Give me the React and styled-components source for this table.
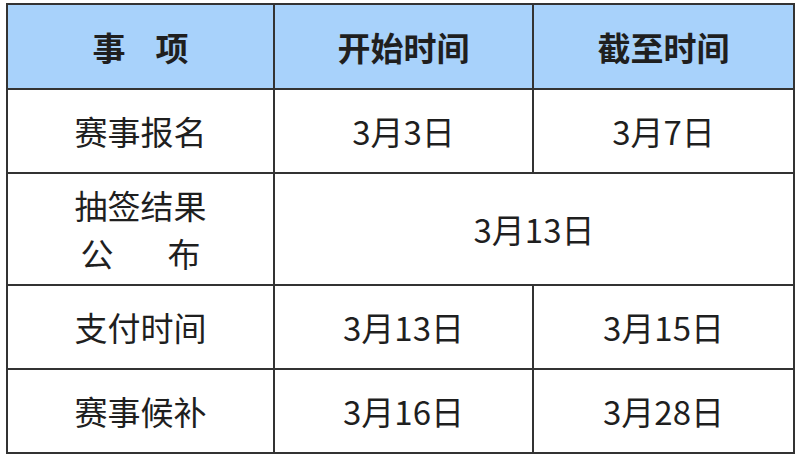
import React from 'react'
import styled, { createGlobalStyle } from 'styled-components'

const GlobalStyle = createGlobalStyle`
  html, body {
    margin: 0;
    padding: 0;
    background: #ffffff;
  }
  body {
    font-family: "Noto Sans CJK SC", "Noto Sans", sans-serif;
  }
`

const Page = styled.div`
  width: 800px;
  height: 462px;
  padding: 3px 0 0 6px;
  box-sizing: border-box;
`

const Table = styled.table`
  border-collapse: collapse;
  table-layout: fixed;
  width: 787px;
  color: #1f1f1f;
  font-size: 33px;
`

const Head = styled.th`
  background: #a8d2fb;
  border: 2px solid #333333;
  font-weight: 700;
  height: 83px;
  line-height: 46px;
  padding: 0;
  text-align: center;
  vertical-align: middle;
`

const Cell = styled.td`
  border: 2px solid #333333;
  font-weight: 400;
  height: ${p => p.$h || 82}px;
  line-height: 48px;
  padding: 0;
  text-align: center;
  vertical-align: middle;
`

const Gap = styled.span`
  display: inline-block;
  width: ${p => p.$w}px;
`

const rows = [
  { name: '赛事报名', start: '3月3日', end: '3月7日' },
  { name: 'draw', merged: '3月13日' },
  { name: '支付时间', start: '3月13日', end: '3月15日' },
  { name: '赛事候补', start: '3月16日', end: '3月28日' }
]

const App = () => {
  return (
    <Page>
      <GlobalStyle />
      <Table>
        <colgroup>
          <col style={{ width: 267 }} />
          <col style={{ width: 259 }} />
          <col style={{ width: 261 }} />
        </colgroup>
        <thead>
          <tr>
            <Head>事<Gap $w={30} />项</Head>
            <Head>开始时间</Head>
            <Head>截至时间</Head>
          </tr>
        </thead>
        <tbody>
          {rows.map(r => r.merged
            ? (
              <tr key={r.name}>
                <Cell $h={110}>抽签结果<br />公<Gap $w={54} />布</Cell>
                <Cell $h={110} colSpan={2}>{r.merged}</Cell>
              </tr>
              )
            : (
              <tr key={r.name}>
                <Cell>{r.name}</Cell>
                <Cell>{r.start}</Cell>
                <Cell>{r.end}</Cell>
              </tr>
              )
          )}
        </tbody>
      </Table>
    </Page>
  )
}

export default App
